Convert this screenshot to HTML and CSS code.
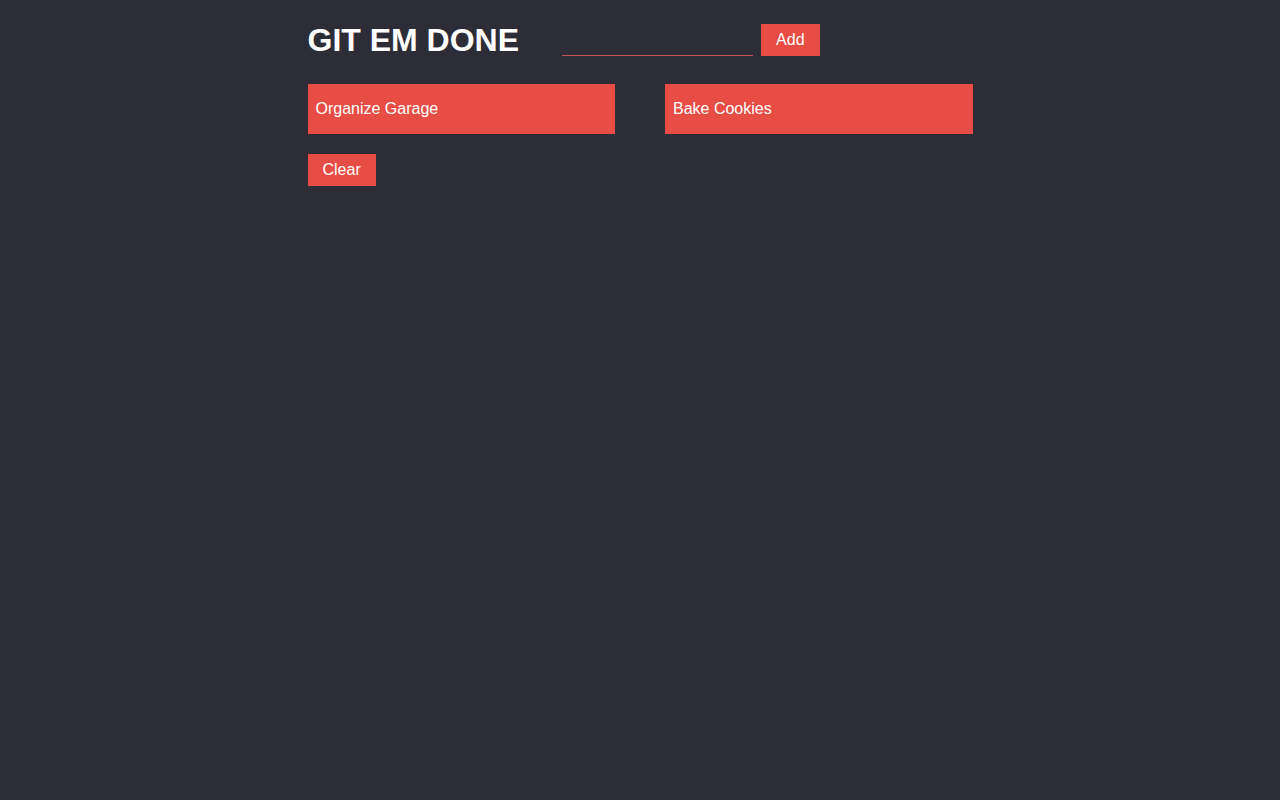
FILE: index.html
```html
<!DOCTYPE html>
<html lang="en">
<head>
<meta charset="utf-8">
<title>Git Em Done</title>
<link rel="stylesheet" href="styles.css">
</head>
<body>
<div class="app">
  <header class="header">
    <h1 class="title">GIT EM DONE</h1>
    <input class="task-input" type="text" aria-label="New task">
    <button class="btn">Add</button>
  </header>
  <div class="tasks">
    <div class="task">Organize Garage</div>
    <div class="task">Bake Cookies</div>
  </div>
  <div class="actions">
    <button class="btn">Clear</button>
  </div>
</div>
</body>
</html>
```
FILE: styles.css
```css
html, body {
  margin: 0;
  padding: 0;
  background: #2d2d37;
  color: #ffffff;
  font-family: "Liberation Sans", Arial, sans-serif;
  min-height: 100%;
}

.app {
  width: 665px;
  margin: 0 auto;
  padding-top: 24px;
}

.header {
  display: flex;
  align-items: center;
  height: 32px;
}

.title {
  margin: 0 43px 0 0;
  font-size: 32px;
  font-weight: bold;
  line-height: 32px;
  color: #ffffff;
}

.task-input {
  width: 191px;
  height: 32px;
  box-sizing: border-box;
  margin: 0 8px 0 0;
  padding: 0 4px;
  border: none;
  border-bottom: 1px solid #c5535a;
  background: transparent;
  color: #ffffff;
  font-family: inherit;
  font-size: 16px;
  outline: none;
}

.btn {
  height: 32px;
  padding: 0 15px;
  border: none;
  background: #e74c45;
  color: #ffffff;
  font-family: "Liberation Sans", Arial, sans-serif;
  font-size: 16px;
  cursor: pointer;
}

.tasks {
  display: grid;
  grid-template-columns: 1fr 1fr;
  column-gap: 50px;
  margin-top: 28px;
}

.task {
  height: 50px;
  display: flex;
  align-items: center;
  padding: 0 8px;
  background: #e74c45;
  color: #ffffff;
  font-size: 16px;
}

.actions {
  margin-top: 20px;
}
```
